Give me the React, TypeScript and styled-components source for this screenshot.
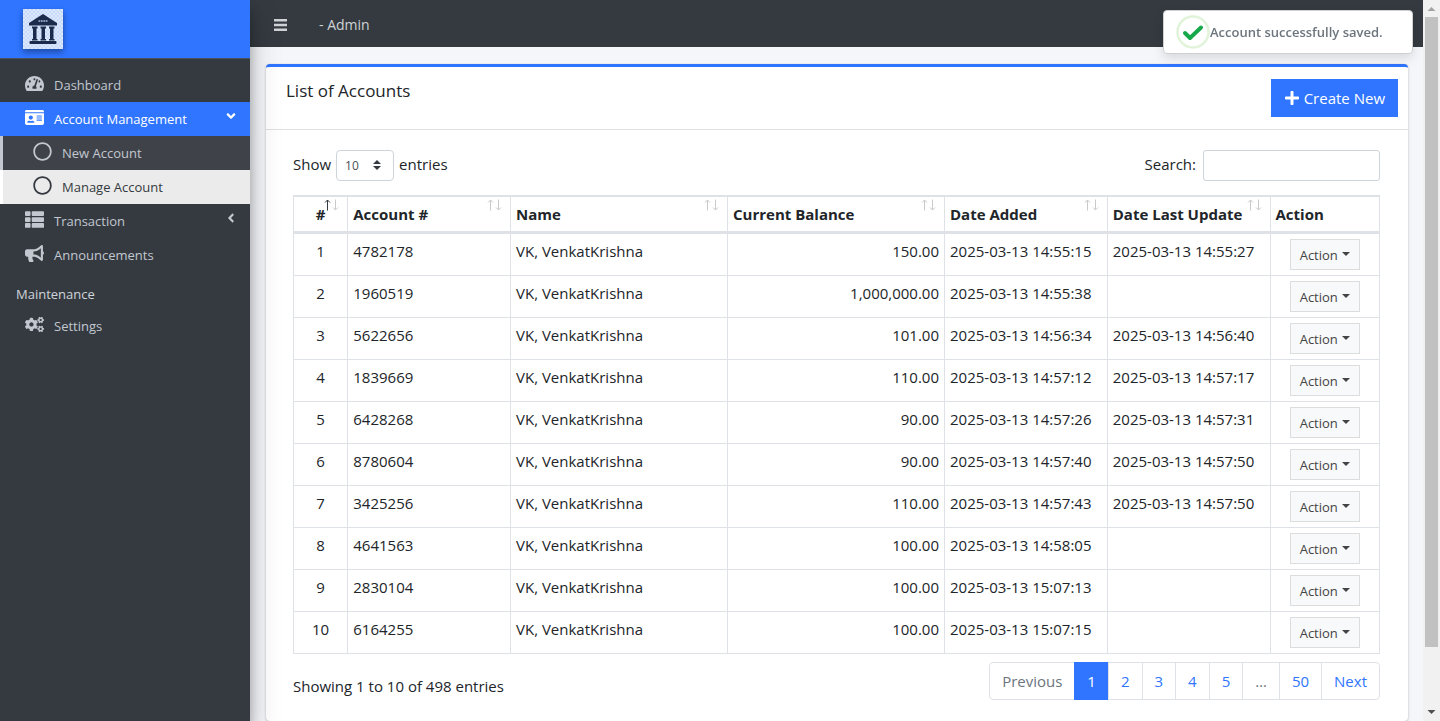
import React from "react";
import styled, { createGlobalStyle, css } from "styled-components";
import {
  FaTachometerAlt,
  FaIdCard,
  FaRegCircle,
  FaThList,
  FaBullhorn,
  FaCogs,
  FaAngleLeft,
  FaAngleDown,
  FaPlus,
} from "react-icons/fa";

const Global = createGlobalStyle`
  *, *::before, *::after { box-sizing: border-box; }
  body {
    margin: 0;
    background: #f4f6f9;
    color: #212529;
    font-family: "Open Sans", "Noto Sans", sans-serif;
    font-size: 15px;
    line-height: 24px;
  }
  button, input, select { font-family: inherit; }
  a { text-decoration: none; color: inherit; }
`;

const Shell = styled.div`
  display: flex;
  height: 100vh;
  overflow: hidden;
`;

/* Sidebar */
const Sidebar = styled.aside`
  flex: 0 0 250px;
  background: #343a40;
  z-index: 2;
  box-shadow: 0 14px 28px rgba(0, 0, 0, 0.25), 0 10px 10px rgba(0, 0, 0, 0.22);
`;

const Brand = styled.a`
  display: flex;
  align-items: center;
  height: 59px;
  padding: 0 23px;
  background: #3075ff;
  border-bottom: 1px solid #4b545c;
`;

const Logo = styled.svg`
  width: 40px;
  height: 40px;
  box-shadow: 0 3px 6px rgba(0, 0, 0, 0.16), 0 3px 6px rgba(0, 0, 0, 0.23);
`;

const Nav = styled.nav`
  display: flex;
  flex-direction: column;
  padding-top: 9px;
`;

const NavIcon = styled.span`
  display: flex;
  justify-content: center;
  width: 21px;
  padding-bottom: 3px;
  & > svg {
    flex: none;
    width: auto;
    height: 19px;
  }
`;

const NavLink = styled.a<{ $tone?: "open" | "sub" | "current" }>`
  display: flex;
  align-items: center;
  height: 34px;
  padding: 0 12px 0 24px;
  gap: 9px;
  font-size: 13px;
  color: #c2c7d0;
  ${(p) => p.$tone === "open" && css`
    background: #3075ff;
    color: #fff;
  `}
  ${(p) => (p.$tone === "sub" || p.$tone === "current") && css`
    padding-left: 29px;
    border-left: 3px solid #c2c7d0;
    background: #3f4349;
  `}
  ${(p) => p.$tone === "current" && css`
    border-left-color: #fff;
    background: #ebebeb;
    color: #343a40;
  `}
`;

const NavText = styled.span`
  flex: 1;
`;

const Caret = styled.span`
  display: flex;
  padding-bottom: 6px;
  font-size: 14px;
`;

const NavHeader = styled.div`
  padding: 10px 16px 3px;
  font-size: 13px;
  color: #d0d4db;
`;

/* Main column */
const Main = styled.div`
  flex: 1;
  min-width: 0;
`;

const TopBar = styled.header`
  display: flex;
  align-items: center;
  gap: 32px;
  height: 47px;
  padding: 3px 24px 0;
  background: #343a40;
  color: #d0d3d6;
  font-size: 14px;
`;

const MenuButton = styled.button`
  display: flex;
  padding: 0;
  border: 0;
  background: none;
  color: #d0d3d6;
  & > svg { width: 13px; height: 12px; }
`;

const Content = styled.main`
  padding: 17px 15px 0 16px;
`;

const Card = styled.section`
  background: #fff;
  border-top: 3px solid #3075ff;
  border-radius: 4px;
  box-shadow: 0 0 1px rgba(0, 0, 0, 0.13), 0 1px 3px rgba(0, 0, 0, 0.2);
`;

const CardHeader = styled.div`
  display: flex;
  justify-content: space-between;
  align-items: flex-start;
  padding: 12px 10px 12px 20px;
  border-bottom: 1px solid #dfdfdf;
`;

const CardTitle = styled.h3`
  margin: 0;
  font-size: 17px;
  font-weight: 400;
  line-height: 24px;
`;

const CreateButton = styled.a`
  display: flex;
  align-items: center;
  gap: 4px;
  height: 38px;
  padding: 0 13px;
  background: #3075ff;
  color: #fff;
  & > svg { width: 16px; height: 16px; }
`;

const CardBody = styled.div`
  padding: 20px 28px 21px 27px;
`;

const Row = styled.div`
  display: flex;
  justify-content: space-between;
`;

const Label = styled.label`
  display: flex;
  gap: 5px;
  line-height: 29px;
`;

const SelectWrap = styled.span`
  position: relative;
  display: flex;
`;

const Select = styled.select`
  appearance: none;
  width: 58px;
  height: 31px;
  padding: 0 8px;
  border: 1px solid #ced4da;
  border-radius: 4px;
  background: #fff;
  color: #495057;
  font-size: 12px;
`;

const SelectArrows = styled.svg`
  position: absolute;
  right: 13px;
  top: 10px;
  width: 8px;
  height: 10px;
  pointer-events: none;
`;

const SearchInput = styled.input`
  width: 177px;
  height: 31px;
  margin-left: 2px;
  border: 1px solid #ced4da;
  border-radius: 3px;
  background: #fff;
`;

const Table = styled.table`
  width: 100%;
  margin: 14px 0 8px;
  table-layout: fixed;
  border-collapse: separate;
  border-spacing: 0;
  border: 1px solid #dee2e6;
`;

const Th = styled.th<{ $center?: boolean }>`
  position: relative;
  padding: 5px;
  border: 1px solid #dee2e6;
  border-width: 1px 1px 2px 0;
  text-align: ${(p) => (p.$center ? "center" : "left")};
  white-space: nowrap;
  &:last-child { border-right-width: 0; }
`;

const SortMarks = styled.svg`
  position: absolute;
  right: 8px;
  top: 2px;
  width: 15px;
  height: 12px;
`;

const Td = styled.td<{ $align?: "center" | "right" }>`
  height: 42px;
  padding: 5px;
  border: 1px solid #dee2e6;
  border-width: 1px 1px 0 0;
  vertical-align: top;
  white-space: nowrap;
  text-align: ${(p) => p.$align || "left"};
  &:last-child { border-right-width: 0; }
`;

const ActionButton = styled.button`
  display: inline-flex;
  align-items: center;
  justify-content: center;
  gap: 4px;
  width: 70px;
  height: 31px;
  padding: 0;
  border: 1px solid #ddd;
  background: #f8f9fa;
  color: #444;
  font-size: 13px;
  vertical-align: top;
  &::after {
    content: "";
    margin-bottom: 2px;
    border: 4px solid transparent;
    border-top-color: #444;
    border-bottom: 0;
  }
`;

const Summary = styled.span`
  padding-top: 12px;
`;

const Pages = styled.nav`
  display: flex;
  border: 1px solid #dee2e6;
  border-radius: 4px;
`;

const Page = styled.a<{ $state?: "active" | "muted" }>`
  height: 36px;
  padding: 6px 12px;
  border-left: 1px solid #dee2e6;
  color: ${(p) => (p.$state === "muted" ? "#6c757d" : "#3075ff")};
  &:first-child { border-left: 0; }
  ${(p) => p.$state === "active" && css`
    height: 38px;
    margin: -1px 0;
    padding: 7px 12px;
    background: #3075ff;
    border-color: #3075ff;
    color: #fff;
  `}
`;

/* Window scroll bar */
const ScrollTrack = styled.div`
  flex: 0 0 17px;
  display: flex;
  flex-direction: column;
  align-items: center;
  background: #f1f1f1;
`;

const ScrollArrow = styled.svg`
  flex: none;
  width: 17px;
  height: 17px;
`;

const ScrollThumb = styled.div`
  flex: 630;
  width: 13px;
  background: #c1c1c1;
`;

const ScrollRest = styled.div`
  flex: 57;
`;

/* Notification */
const Toast = styled.div`
  position: fixed;
  top: 10px;
  right: 27px;
  z-index: 5;
  display: flex;
  align-items: center;
  width: 250px;
  height: 44px;
  padding: 0 12px;
  border: 1px solid #d0d0d0;
  border-radius: 4px;
  background: #fff;
  box-shadow: 0 4px 12px rgba(0, 0, 0, 0.12);
  color: #6c757d;
  font-size: 13px;
  font-weight: 600;
  & > svg { width: 34px; height: 34px; }
`;

const columns = [
  { name: "#", width: "5%" },
  { name: "Account #", width: "15%" },
  { name: "Name", width: "20%" },
  { name: "Current Balance", width: "20%" },
  { name: "Date Added", width: "15%" },
  { name: "Date Last Update", width: "15%" },
  { name: "Action", width: "10%" },
];

const rows = [
  ["4782178", "150.00", "2025-03-13 14:55:15", "2025-03-13 14:55:27"],
  ["1960519", "1,000,000.00", "2025-03-13 14:55:38", ""],
  ["5622656", "101.00", "2025-03-13 14:56:34", "2025-03-13 14:56:40"],
  ["1839669", "110.00", "2025-03-13 14:57:12", "2025-03-13 14:57:17"],
  ["6428268", "90.00", "2025-03-13 14:57:26", "2025-03-13 14:57:31"],
  ["8780604", "90.00", "2025-03-13 14:57:40", "2025-03-13 14:57:50"],
  ["3425256", "110.00", "2025-03-13 14:57:43", "2025-03-13 14:57:50"],
  ["4641563", "100.00", "2025-03-13 14:58:05", ""],
  ["2830104", "100.00", "2025-03-13 15:07:13", ""],
  ["6164255", "100.00", "2025-03-13 15:07:15", ""],
];

const pages = ["Previous", "1", "2", "3", "4", "5", "…", "50", "Next"];

const BankLogo = () => (
  <Logo viewBox="0 0 40 40" aria-label="Bank">
    <defs>
      <pattern id="checks" width="4" height="4" patternUnits="userSpaceOnUse">
        <rect width="4" height="4" fill="#dce8fc" />
        <rect width="2" height="2" fill="#c8daf8" />
        <rect x="2" y="2" width="2" height="2" fill="#c8daf8" />
      </pattern>
    </defs>
    <rect width="40" height="40" fill="url(#checks)" />
    <g fill="#1b2b4b">
      <path d="M20 5 34 14v2.500H6V14z" />
      <path d="M9 17.500h5.500v2h-1V30h1v1.500H9V30h1V19.500H9zM17.500 17.500H23v2h-1V30h1v1.500h-5.500V30h1V19.500h-1zM26 17.500h5.500v2h-1V30h1v1.500H26V30h1V19.500h-1z" />
      <rect x="6.500" y="32" width="27" height="3" rx="1" />
    </g>
    <path d="M15.500 12h9" stroke="#a9b8d4" strokeWidth="1.600" strokeDasharray="1.800 .6" />
  </Logo>
);

const Marks = ({ asc }: { asc?: boolean }) => (
  <SortMarks viewBox="0 0 15 12" fill="none">
    <path d="M3.500 11.500V1M1 3.500 3.500 1 6 3.500" stroke={asc ? "#343a40" : "#c8cacc"} />
    <path d="M11.500 .5V11M9 8.500 11.500 11 14 8.500" stroke="#c8cacc" />
  </SortMarks>
);

export default function App() {
  return (
    <>
      <Global />
      <Shell>
        <Sidebar>
          <Brand href="#"><BankLogo /></Brand>
          <Nav>
            <NavLink href="#">
              <NavIcon><FaTachometerAlt /></NavIcon><NavText>Dashboard</NavText>
            </NavLink>
            <NavLink href="#" $tone="open">
              <NavIcon><FaIdCard /></NavIcon><NavText>Account Management</NavText>
              <Caret><FaAngleDown /></Caret>
            </NavLink>
            <NavLink href="#" $tone="sub">
              <NavIcon><FaRegCircle /></NavIcon><NavText>New Account</NavText>
            </NavLink>
            <NavLink href="#" $tone="current">
              <NavIcon><FaRegCircle /></NavIcon><NavText>Manage Account</NavText>
            </NavLink>
            <NavLink href="#">
              <NavIcon><FaThList /></NavIcon><NavText>Transaction</NavText>
              <Caret><FaAngleLeft /></Caret>
            </NavLink>
            <NavLink href="#">
              <NavIcon><FaBullhorn /></NavIcon><NavText>Announcements</NavText>
            </NavLink>
            <NavHeader>Maintenance</NavHeader>
            <NavLink href="#">
              <NavIcon><FaCogs /></NavIcon><NavText>Settings</NavText>
            </NavLink>
          </Nav>
        </Sidebar>
        <Main>
          <TopBar>
            <MenuButton aria-label="Toggle menu">
              <svg viewBox="0 0 13 12" fill="currentColor">
                <path d="M0 0h13v2.500H0zM0 4.700h13v2.500H0zM0 9.500h13V12H0z" />
              </svg>
            </MenuButton>
            <a href="#">- Admin</a>
          </TopBar>
          <Content>
            <Card>
              <CardHeader>
                <CardTitle>List of Accounts</CardTitle>
                <CreateButton href="#"><FaPlus />Create New</CreateButton>
              </CardHeader>
              <CardBody>
                <Row>
                  <Label>
                    Show
                    <SelectWrap>
                      <Select defaultValue="10">
                        <option>10</option>
                        <option>25</option>
                        <option>50</option>
                      </Select>
                      <SelectArrows viewBox="0 0 8 10" fill="#343a40">
                        <path d="M4 0 8 4H0zM4 10 0 6h8z" />
                      </SelectArrows>
                    </SelectWrap>
                    entries
                  </Label>
                  <Label>Search:<SearchInput type="search" /></Label>
                </Row>
                <Table>
                  <colgroup>
                    {columns.map((c) => <col key={c.name} width={c.width} />)}
                  </colgroup>
                  <thead>
                    <tr>
                      {columns.map((c, i) => (
                        <Th key={c.name} $center={i === 0}>
                          {c.name}
                          {i < 6 && <Marks asc={i === 0} />}
                        </Th>
                      ))}
                    </tr>
                  </thead>
                  <tbody>
                    {rows.map(([account, balance, added, updated], i) => (
                      <tr key={account}>
                        <Td $align="center">{i + 1}</Td>
                        <Td>{account}</Td>
                        <Td>VK, VenkatKrishna</Td>
                        <Td $align="right">{balance}</Td>
                        <Td>{added}</Td>
                        <Td>{updated}</Td>
                        <Td $align="center"><ActionButton>Action</ActionButton></Td>
                      </tr>
                    ))}
                  </tbody>
                </Table>
                <Row>
                  <Summary>Showing 1 to 10 of 498 entries</Summary>
                  <Pages aria-label="Pages">
                    {pages.map((p) => (
                      <Page
                        key={p}
                        href="#"
                        $state={p === "1" ? "active" : p === "Previous" || p === "…" ? "muted" : undefined}
                      >
                        {p}
                      </Page>
                    ))}
                  </Pages>
                </Row>
              </CardBody>
            </Card>
          </Content>
        </Main>
        <ScrollTrack aria-hidden="true">
          <ScrollArrow viewBox="0 0 17 17"><path d="M4.500 11 8.500 7l4 4z" fill="#a3a3a3" /></ScrollArrow>
          <ScrollThumb />
          <ScrollRest />
          <ScrollArrow viewBox="0 0 17 17"><path d="M4.500 6 8.500 10l4-4z" fill="#505050" /></ScrollArrow>
        </ScrollTrack>
      </Shell>
      <Toast role="status">
        <svg viewBox="0 0 34 34" fill="none">
          <circle cx="17" cy="17" r="15.500" stroke="#e1f4d9" strokeWidth="2.500" />
          <path d="m9 18 5 5L25 12.500" stroke="#18a84c" strokeWidth="4" strokeLinecap="round" strokeLinejoin="round" />
        </svg>
        Account successfully saved.
      </Toast>
    </>
  );
}
